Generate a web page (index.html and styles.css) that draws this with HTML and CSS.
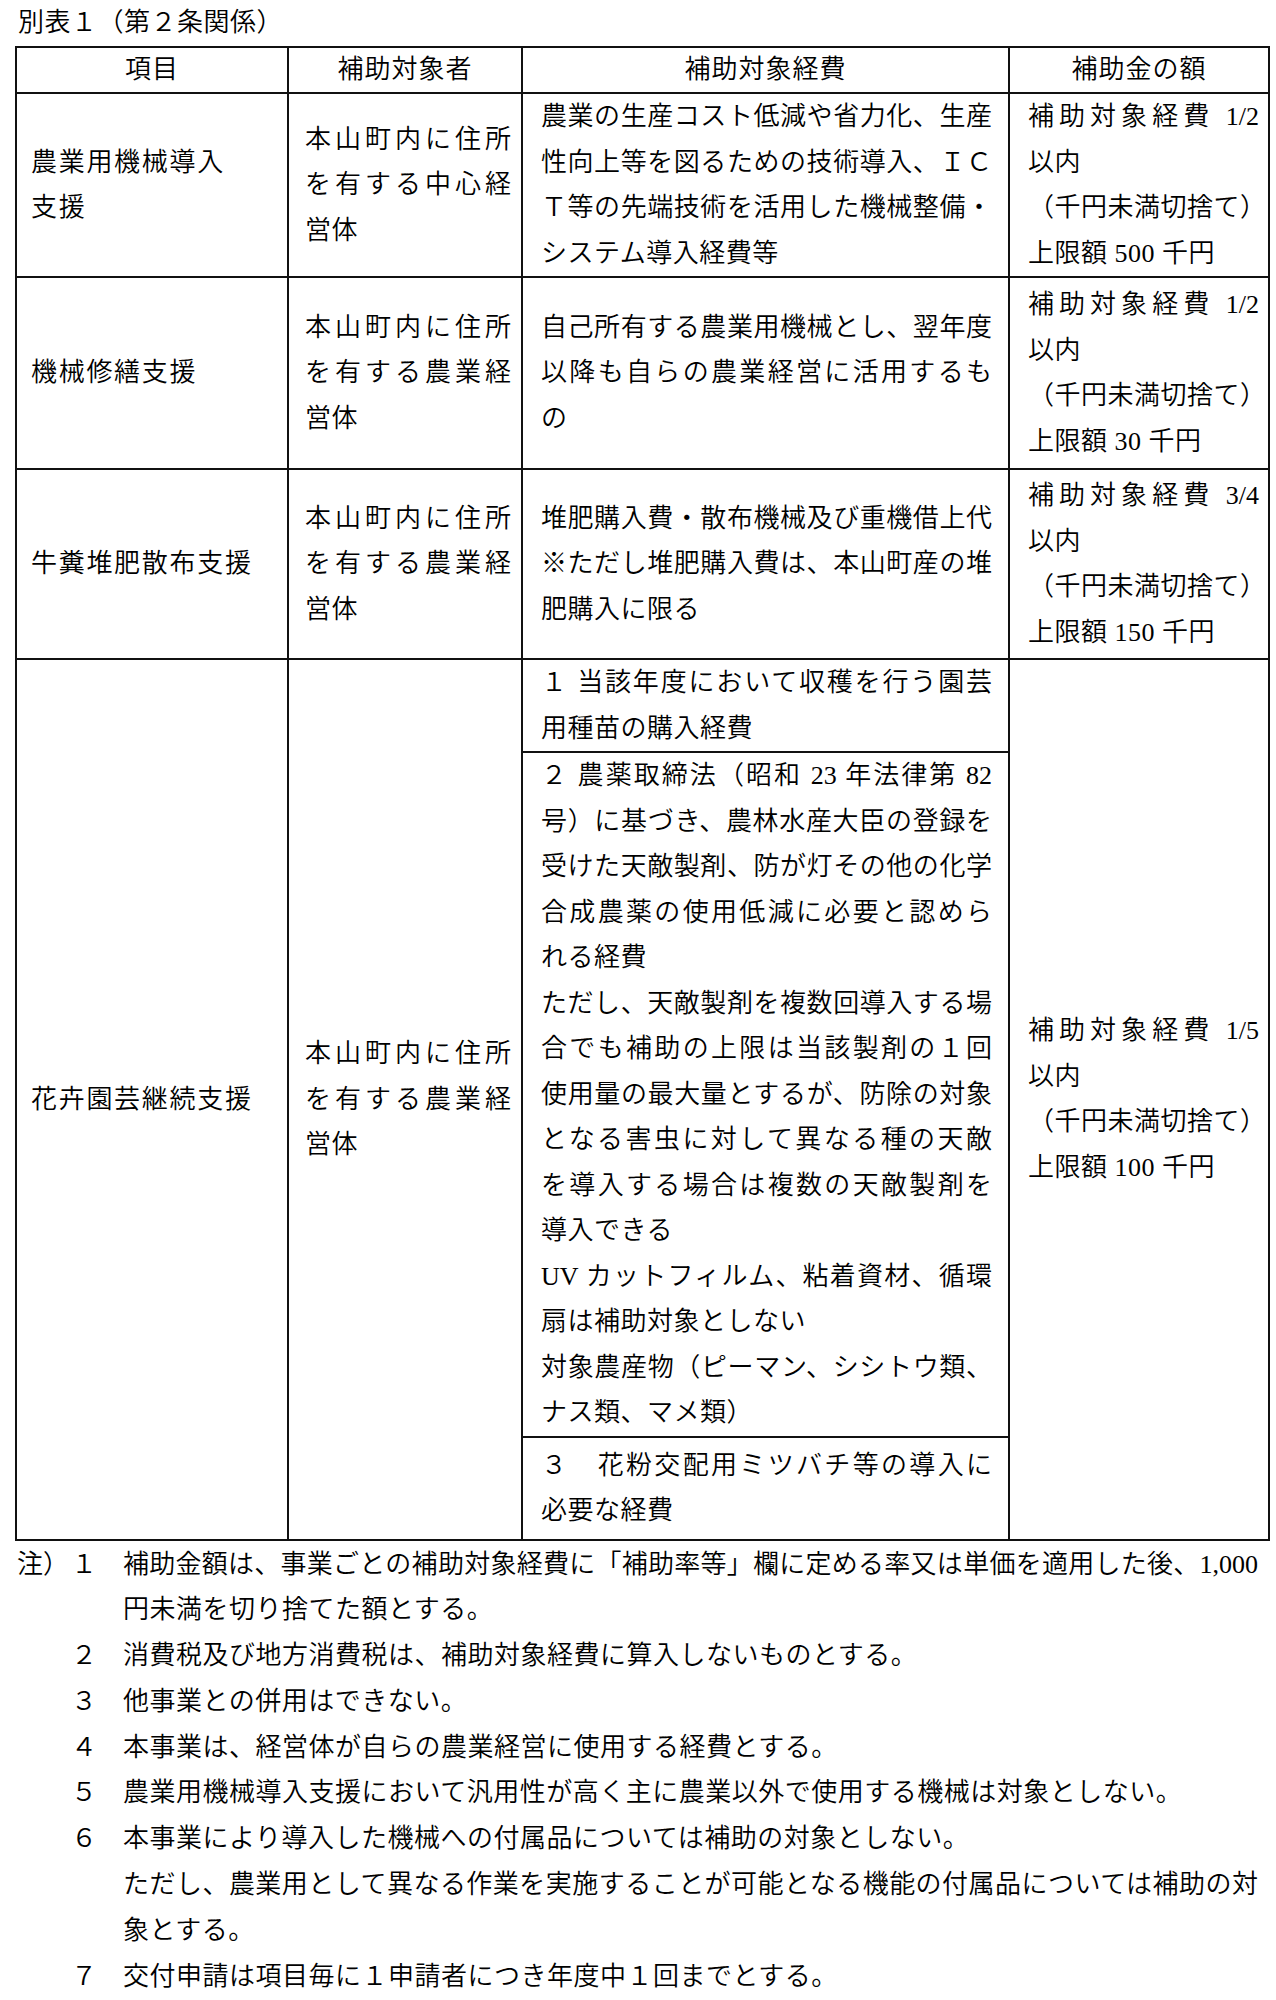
FILE: index.html
```html
<!DOCTYPE html>
<html lang="ja">
<head>
<meta charset="utf-8">
<title>別表１（第２条関係）</title>
<link rel="stylesheet" href="styles.css">
</head>
<body>
<div class="title">別表１（第２条関係）</div>
<table class="t">
  <colgroup>
    <col class="w1"><col class="w2"><col class="w3"><col class="w4">
  </colgroup>
  <tr class="hd">
    <th>項目</th><th>補助対象者</th><th>補助対象経費</th><th>補助金の額</th>
  </tr>
  <tr class="r1">
    <td class="c1"><span class="l">農業用機械導入</span><span class="l">支援</span></td>
    <td class="c2"><span class="j">本山町内に住所</span><span class="j">を有する中心経</span><span class="l">営体</span></td>
    <td class="c3"><span class="j">農業の生産コスト低減や省力化、生産</span><span class="j">性向上等を図るための技術導入、ＩＣ</span><span class="j">Ｔ等の先端技術を活用した機械整備・</span><span class="l">システム導入経費等</span></td>
    <td class="c4"><span class="j">補助対象経費 1/2</span><span class="l">以内</span><span class="l">（千円未満切捨て）</span><span class="l">上限額 500 千円</span></td>
  </tr>
  <tr class="r2">
    <td class="c1"><span class="l">機械修繕支援</span></td>
    <td class="c2"><span class="j">本山町内に住所</span><span class="j">を有する農業経</span><span class="l">営体</span></td>
    <td class="c3"><span class="j">自己所有する農業用機械とし、翌年度</span><span class="j">以降も自らの農業経営に活用するも</span><span class="l">の</span></td>
    <td class="c4"><span class="j">補助対象経費 1/2</span><span class="l">以内</span><span class="l">（千円未満切捨て）</span><span class="l">上限額 30 千円</span></td>
  </tr>
  <tr class="r3">
    <td class="c1"><span class="l">牛糞堆肥散布支援</span></td>
    <td class="c2"><span class="j">本山町内に住所</span><span class="j">を有する農業経</span><span class="l">営体</span></td>
    <td class="c3"><span class="j">堆肥購入費・散布機械及び重機借上代</span><span class="j">※ただし堆肥購入費は、本山町産の堆</span><span class="l">肥購入に限る</span></td>
    <td class="c4"><span class="j">補助対象経費 3/4</span><span class="l">以内</span><span class="l">（千円未満切捨て）</span><span class="l">上限額 150 千円</span></td>
  </tr>
  <tr class="s1">
    <td class="c1" rowspan="3"><span class="l">花卉園芸継続支援</span></td>
    <td class="c2" rowspan="3"><span class="j">本山町内に住所</span><span class="j">を有する農業経</span><span class="l">営体</span></td>
    <td class="c3"><span class="j">１ 当該年度において収穫を行う園芸</span><span class="l">用種苗の購入経費</span></td>
    <td class="c4" rowspan="3"><span class="j">補助対象経費 1/5</span><span class="l">以内</span><span class="l">（千円未満切捨て）</span><span class="l">上限額 100 千円</span></td>
  </tr>
  <tr class="s2">
    <td class="c3"><span class="j">２ 農薬取締法（昭和 23 年法律第 82</span><span class="j">号）に基づき、農林水産大臣の登録を</span><span class="j">受けた天敵製剤、防が灯その他の化学</span><span class="j">合成農薬の使用低減に必要と認めら</span><span class="l">れる経費</span><span class="j">ただし、天敵製剤を複数回導入する場</span><span class="j">合でも補助の上限は当該製剤の１回</span><span class="j">使用量の最大量とするが、防除の対象</span><span class="j">となる害虫に対して異なる種の天敵</span><span class="j">を導入する場合は複数の天敵製剤を</span><span class="l">導入できる</span><span class="j">UV カットフィルム、粘着資材、循環</span><span class="l">扇は補助対象としない</span><span class="j">対象農産物（ピーマン、シシトウ類、</span><span class="l">ナス類、マメ類）</span></td>
  </tr>
  <tr class="s3">
    <td class="c3"><span class="j">３　花粉交配用ミツバチ等の導入に</span><span class="l">必要な経費</span></td>
  </tr>
</table>
<div class="notes">
  <div class="note"><span class="lab">注）</span><span class="num">１</span><div class="txt"><span class="j">補助金額は、事業ごとの補助対象経費に「補助率等」欄に定める率又は単価を適用した後、1,000</span><span class="l">円未満を切り捨てた額とする。</span></div></div>
  <div class="note"><span class="lab"></span><span class="num">２</span><div class="txt"><span class="l">消費税及び地方消費税は、補助対象経費に算入しないものとする。</span></div></div>
  <div class="note"><span class="lab"></span><span class="num">３</span><div class="txt"><span class="l">他事業との併用はできない。</span></div></div>
  <div class="note"><span class="lab"></span><span class="num">４</span><div class="txt"><span class="l">本事業は、経営体が自らの農業経営に使用する経費とする。</span></div></div>
  <div class="note"><span class="lab"></span><span class="num">５</span><div class="txt"><span class="l">農業用機械導入支援において汎用性が高く主に農業以外で使用する機械は対象としない。</span></div></div>
  <div class="note"><span class="lab"></span><span class="num">６</span><div class="txt"><span class="l">本事業により導入した機械への付属品については補助の対象としない。</span><span class="j">ただし、農業用として異なる作業を実施することが可能となる機能の付属品については補助の対</span><span class="l">象とする。</span></div></div>
  <div class="note"><span class="lab"></span><span class="num">７</span><div class="txt"><span class="l">交付申請は項目毎に１申請者につき年度中１回までとする。</span></div></div>
</div>
</body>
</html>
```
FILE: styles.css
```css
html, body {
  margin: 0;
  padding: 0;
  background: #ffffff;
}

body {
  font-family: "Liberation Serif", "Noto Sans CJK JP", serif;
  font-size: 26px;
  font-weight: 350;
  color: #000000;
  width: 1276px;
}

.title {
  padding: 1px 0 0 18px;
  height: 45px;
  line-height: 44px;
  letter-spacing: 0.5px;
}

.t {
  border-collapse: collapse;
  table-layout: fixed;
  width: 1253px;
  margin-left: 15px;
}

.w1 { width: 272px; }
.w2 { width: 234px; }
.w3 { width: 487px; }
.w4 { width: 260px; }

.t th,
.t td {
  border: 2px solid #111111;
  padding: 0;
  vertical-align: middle;
  line-height: 45.5px;
  font-weight: inherit;
  text-align: left;
}

.t th {
  text-align: center;
  line-height: 44px;
  letter-spacing: 1px;
}

.c1 { padding-left: 14px !important; }
.c2 { padding: 0 10px 0 16px !important; }
.c3 { padding: 0 16px 0 18px !important; }
.c4 { padding: 0 9px 0 18px !important; }

.r2 { height: 192px; }
.r3 { height: 190px; }
.s3 { height: 103px; }

.l {
  display: block;
  white-space: nowrap;
  letter-spacing: 0.5px;
}

.c1 .l {
  letter-spacing: 1.7px;
}

.j {
  display: block;
  text-align: justify;
  text-align-last: justify;
  letter-spacing: 0;
}

.notes {
  padding-left: 17px;
  padding-top: 1px;
}

.note {
  display: grid;
  grid-template-columns: 54px 52px 1135px;
  line-height: 45.8px;
}

.num {
  letter-spacing: 0;
}
```
